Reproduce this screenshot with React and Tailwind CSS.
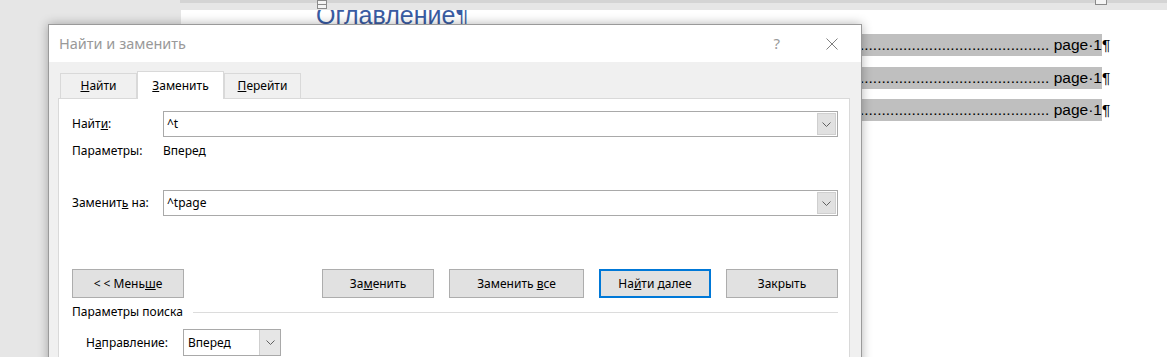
import React from 'react';

const ui = "font-['Noto_Sans',sans-serif]";
const doc = "font-['Liberation_Sans',Arial,sans-serif]";

function Chevron() {
  return (
    <svg width="9" height="5" viewBox="0 0 9 5">
      <path d="M0.5 0.5 L4.5 4.5 L8.5 0.5" fill="none" stroke="#606060" strokeWidth="1" />
    </svg>
  );
}

function Combo({ value }) {
  return (
    <div className="flex-1 flex h-[26px] border border-[#a9a9a9] bg-white">
      <div className="flex-1 pl-[3px] text-[12px] leading-[24px] text-black">{value}</div>
      <div className="my-px mr-px w-[19px] flex items-center justify-center bg-[#e1e1e1] border border-[#cfcfcf]">
        <Chevron />
      </div>
    </div>
  );
}

function Btn({ children, w, primary }) {
  return (
    <div
      className={`h-[29px] ${w} flex items-center justify-center text-[12px] text-black bg-[#e1e1e1] ${
        primary ? 'border-2 border-[#0078d7]' : 'border border-[#adadad]'
      }`}
    >
      <span className="whitespace-pre">{children}</span>
    </div>
  );
}

function Tab({ children, active, w }) {
  if (active) {
    return (
      <div className={`${w} h-[28px] bg-white border-x border-t border-[#d9d9d9] flex items-center justify-center text-[12px] text-black`}>
        {children}
      </div>
    );
  }
  return (
    <div className={`${w} h-[25px] mb-px border-x border-t border-[#d9d9d9] flex items-center justify-center text-[12px] text-black`}>
      {children}
    </div>
  );
}

// строка оглавления: серая подсветка поля, точки-заполнитель и номер страницы
function TocRow() {
  return (
    <div className="flex items-center pl-[135px] h-[22px]">
      <div className="w-[786px] h-[22px] bg-[#bfbfbf] flex items-center text-[15.5px] text-black whitespace-nowrap">
        <div className="flex-1 flex justify-end overflow-hidden">
          <span>{'.'.repeat(200)}</span>
        </div>
        <span>&nbsp;page·1</span>
      </div>
      <span className="text-[15.5px] text-black">¶</span>
    </div>
  );
}

export default function App() {
  return (
    <div className={`relative w-[1167px] h-[357px] overflow-hidden bg-[#e6e6e6] flex flex-col ${ui}`}>
      {/* ruler strip */}
      <div className="h-[10px] flex shrink-0">
        <div className="w-[180px]" />
        <div className="flex-1 flex flex-col">
          <div className="h-[3px] bg-[#d4d4d4]" />
          <div className="flex-1 bg-[#e6e6e6]" />
        </div>
      </div>
      {/* ruler markers */}
      <div className="absolute left-[317px] top-0 w-[10px] flex flex-col">
        <div className="h-[5px] border border-[#8a8a8a] bg-[#f4f4f4]" />
        <div className="h-[5px] -mt-px border border-[#8a8a8a] bg-[#f4f4f4]" />
      </div>
      <div className="absolute left-[1095px] top-0 w-[12px] h-[5px] border border-[#8a8a8a] border-t-0 bg-[#f4f4f4]" />

      <div className="flex-1 flex min-h-0">
        <div className="w-[181px] shrink-0 bg-[#e6e6e6]" />
        <div className={`flex-1 bg-white overflow-hidden ${doc}`}>
          <div className="pl-[135px] -mt-[7px] h-[25px] text-[25px] leading-[25px] text-[#3a5ca3]">Оглавление¶</div>
          <div className="mt-[6px] flex flex-col gap-[10.5px]">
            <TocRow />
            <TocRow />
            <TocRow />
          </div>
        </div>
      </div>

      {/* dialog window */}
      <div className="absolute left-[48px] top-[24px] w-[814px] h-[360px] border border-[#9a9a9a] bg-[#f0f0f0] shadow-[0_0_10px_rgba(0,0,0,0.3)] flex flex-col">
        <div className="h-[37px] bg-white flex items-center pl-[10px] pr-[23px]">
          <span className="text-[14.5px] text-[#999999]">Найти и заменить</span>
          <span className="ml-auto text-[15px] text-[#9a9a9a]">?</span>
          <svg className="ml-[46px]" width="12" height="12" viewBox="0 0 12 12">
            <path d="M0.5 0.5 L11.5 11.5 M11.5 0.5 L0.5 11.5" stroke="#808080" strokeWidth="1" />
          </svg>
        </div>

        <div className="pt-[9px] pl-[9px] pr-[11px] flex-1 flex flex-col">
          <div className="flex items-end pl-[2px] h-[28px] relative z-10">
            <Tab w="w-[77px]"><span><u>Н</u>айти</span></Tab>
            <Tab w="w-[87px]" active><span><u>З</u>аменить</span></Tab>
            <Tab w="w-[77px]"><span><u>П</u>ерейти</span></Tab>
          </div>
          <div className="-mt-px flex-1 border border-[#d9d9d9] bg-white pl-[13px] pr-[11px] pt-[12px] text-[12px] text-black">
            <div className="flex items-center">
              <div className="w-[91px]">Найт<u>и</u>:</div>
              <Combo value="^t" />
            </div>
            <div className="mt-[6px] h-[16px] flex items-center">
              <div className="w-[91px]">Параметры:</div>
              <div>Вперед</div>
            </div>
            <div className="mt-[31px] flex items-center">
              <div className="w-[91px]">Замени<span>т</span><u>ь</u> на:</div>
              <Combo value="^tpage" />
            </div>
            <div className="mt-[53px] flex items-center">
              <Btn w="w-[112px]">{'< < Мень'}<u>ш</u>е</Btn>
              <div className="flex-1" />
              <div className="flex gap-[15px]">
                <Btn w="w-[112px]">За<u>м</u>енить</Btn>
                <Btn w="w-[135px]">{'Заменить '}<u>в</u>се</Btn>
                <Btn w="w-[112px]" primary>На<u>й</u>ти далее</Btn>
                <Btn w="w-[112px]">Закрыть</Btn>
              </div>
            </div>
            <div className="mt-[6px] h-[16px] flex items-center">
              <span>Параметры поиска</span>
              <div className="flex-1 ml-[10px] h-px bg-[#dcdcdc]" />
            </div>
            <div className="mt-[9px] flex items-center pl-[14px]">
              <div className="w-[97px]">Н<u>а</u>правление:</div>
              <div className="w-[98px] h-[27px] flex border border-[#a9a9a9] bg-white">
                <div className="flex-1 pl-[4px] leading-[25px]">Вперед</div>
                <div className="w-[21px] border-l border-[#cfcfcf] bg-[#e6e6e6] flex items-center justify-center">
                  <Chevron />
                </div>
              </div>
            </div>
          </div>
        </div>
      </div>
    </div>
  );
}
